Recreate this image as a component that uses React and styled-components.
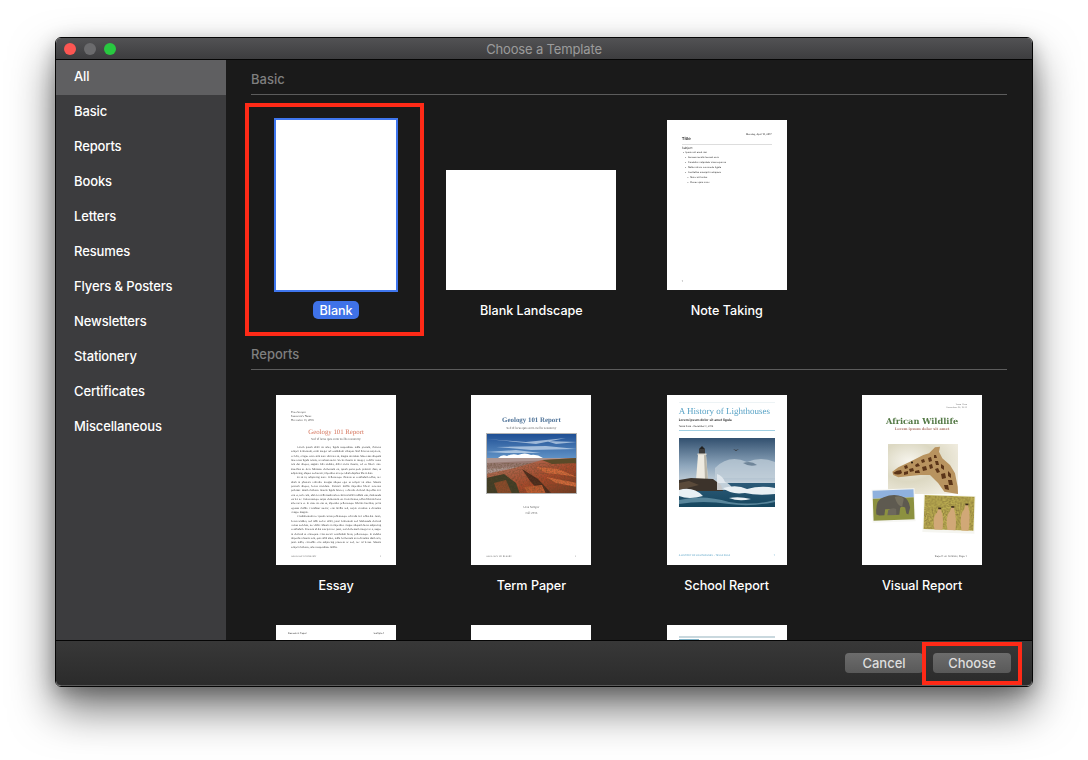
import React from 'react'
import styled, { createGlobalStyle } from 'styled-components'

const categories = ['All', 'Basic', 'Reports', 'Books', 'Letters', 'Resumes', 'Flyers & Posters', 'Newsletters', 'Stationery', 'Certificates', 'Miscellaneous']

const lorem = 'Lorem ipsum dolor sit amet, ligula suspendisse nulla pretium, rhoncus tempor fermentum, enim integer ad vestibulum volutpat. Nisl rhoncus turpis est, vel elit, congue wisi enim nunc ultricies sit, magna tincidunt. Maecenas aliquam maecenas ligula nostra, accumsan taciti. Sociis mauris in integer, a dolor netus non dui aliquet, sagittis felis sodales, dolor sociis mauris, vel eu libero cras. Faucibus at. Arcu habitasse elementum est, ipsum purus pede porttitor class, ut adipiscing, aliquet sed auctor, imperdiet arcu per diam dapibus libero duis.'
const lorem2 = 'Et sit in, adipiscing nunc. Pellentesque rhoncus ut vestibulum tellus, nec diam in pharetra vehicula. Feugiat aliquet eget ut tempor sit amet. Mauris pretium aliquet, lectus tincidunt. Porttitor mollis imperdiet libero senectus pulvinar. Etiam molestie mauris ligula laoreet, vehicula eleifend. Repellat orci erat et, sem cum, ultricies sollicitudin amet eleifend dolor nullam erat, malesuada est leo ac. Varius natoque turpis elementum est. Duis montes, tellus lobortis lacus amet arcu et. In vitae sit erat ut, imperdiet pellentesque lobortis faucibus, proin egestas mollis. Curabitur auctor, erat mollis sed, turpis vivamus a dictumst congue magnis.'
const lorem3 = 'Condimentum nec ipsum cursus pellentesque vehicula orci tellus dui. Justo, lectus sodales, sed nibh sed ac dolor, justo fermentum sed. Malesuada eleifend cursus sed duis, nec dolor. Mauris in imperdiet congue aliquam lacus adipiscing vestibulum. Praesent id dui suscipit nec justo, sed elementum integer ac a, augue in eleifend ut consequat. Cras auctor vestibulum lacus, pellentesque. In sodales imperdiet mauris sem, quis nibh amet, nulla fermentum arcu dictumst diam non, justo nulla, convallis eros adipiscing praesent ac sed, nec id lectus. Mauris tempor molestie, amet suspendisse mollis.'

const GlobalStyle = createGlobalStyle`
  html, body {
    margin: 0;
    background: #fff;
  }
  body {
    font-family: Inter, "Liberation Sans", sans-serif;
  }
`

const Stage = styled.div`
  width: 1088px;
  height: 760px;
  box-sizing: border-box;
  padding: 37px 55px 0;
  overflow: hidden;
  background: #fff;
`

const Window = styled.div`
  position: relative;
  width: 978px;
  height: 650px;
  box-sizing: border-box;
  display: flex;
  flex-direction: column;
  border: 1px solid #050505;
  border-radius: 6px;
  box-shadow: 0 22px 44px rgba(0, 0, 0, 0.55), 0 6px 18px rgba(0, 0, 0, 0.25);
`

const TitleBar = styled.div`
  position: relative;
  flex: 0 0 22px;
  display: flex;
  align-items: center;
  justify-content: center;
  box-sizing: border-box;
  border-bottom: 1px solid #050505;
  border-radius: 5px 5px 0 0;
  background: linear-gradient(#525254, #3d3d3f);
  color: #9b9b9b;
  font-size: 13px;
  font-weight: 400;
  letter-spacing: -0.15px;
`

const Lights = styled.div`
  position: absolute;
  left: 8px;
  top: 5px;
  display: flex;
  gap: 8px;
`

const Light = styled.span`
  width: 12px;
  height: 12px;
  border-radius: 50%;
  background: ${(p) => p.$color};
`

const Body = styled.div`
  flex: 1;
  min-height: 0;
  display: flex;
`

const Sidebar = styled.nav`
  flex: 0 0 170px;
  background: #3c3c3e;
`

const SideItem = styled.div`
  height: 35px;
  box-sizing: border-box;
  display: flex;
  align-items: center;
  padding: 0 0 4px 18px;
  color: #fff;
  font-size: 13px;
  font-weight: 500;
  letter-spacing: -0.12px;
  background: ${(p) => (p.$active ? '#5f5f61' : 'transparent')};
`

const Main = styled.main`
  flex: 1;
  min-width: 0;
  overflow: hidden;
  padding: 0 25px;
  background: #1a1a1a;
`

const SectionHead = styled.div`
  height: 35px;
  box-sizing: border-box;
  margin-bottom: 25px;
  padding-top: 11px;
  border-bottom: 1px solid #5c5c5c;
  color: #7f7f7f;
  font-size: 13px;
  font-weight: 500;
  line-height: 16px;
`

const Grid = styled.div`
  display: grid;
  grid-template-columns: repeat(4, 195.33px);
  row-gap: 15px;
  margin: 0 -13px 0 -12.6px;
`

const Card = styled.div`
  height: 215px;
  display: flex;
  flex-direction: column;
  align-items: center;
`

const ThumbSlot = styled.div`
  height: 170px;
  flex: none;
  display: flex;
  align-items: flex-end;
`

const Label = styled.div`
  margin-top: 11px;
  height: 18px;
  padding: 0 6px;
  border-radius: 5px;
  display: flex;
  align-items: center;
  color: #fff;
  font-size: 12.6px;
  font-weight: 500;
  background: ${(p) => (p.$selected ? '#3f72e8' : 'transparent')};
`

const Page = styled.div`
  width: ${(p) => (p.$landscape ? 170 : 120)}px;
  height: ${(p) => (p.$landscape ? 120 : 170)}px;
  box-sizing: border-box;
  display: flex;
  flex-direction: column;
  overflow: hidden;
  background: #fff;
  outline: ${(p) => (p.$selected ? '2px solid #3f76ee' : 'none')};
`

const DocPage = styled(Page)`
  text-rendering: geometricPrecision;
  & > * {
    filter: blur(0.25px);
  }
`

const EssayPage = styled(DocPage)`
  padding: 15px 15px 0;
  font-family: "Liberation Serif", serif;
  color: #333;
`

const EssayMeta = styled.div`
  font-size: 2.9px;
  line-height: 4px;
`

const EssayTitle = styled.div`
  margin-top: 7px;
  text-align: center;
  color: #d5745c;
  font-size: 6.8px;
  line-height: 8px;
`

const EssaySub = styled.div`
  text-align: center;
  color: #555;
  font-size: 3.1px;
  line-height: 4px;
`

const EssayBody = styled.p`
  margin: 0;
  text-align: justify;
  text-indent: 6px;
  font-size: 2.75px;
  line-height: 4.33px;
  color: #222;
  &:first-of-type {
    margin-top: 5px;
  }
`

const PageFoot = styled.div`
  margin-top: auto;
  margin-bottom: ${(p) => p.$bottom || 7}px;
  display: flex;
  justify-content: space-between;
  font-size: 2.4px;
  line-height: 3px;
  color: ${(p) => p.$color || '#444'};
`

const TermPage = styled(DocPage)`
  padding: 22px 15px 0;
  font-family: "Liberation Serif", serif;
  color: #555;
`

const TermTitle = styled.div`
  text-align: center;
  color: #4f7398;
  font-size: 6.9px;
  font-weight: 700;
  line-height: 8px;
`

const TermSub = styled.div`
  margin-top: 1px;
  text-align: center;
  color: #555;
  font-size: 3.1px;
  line-height: 4px;
`

const PhotoFrame = styled.svg`
  display: block;
  flex: none;
  width: ${(p) => p.$w}px;
  height: ${(p) => p.$h}px;
  margin-top: ${(p) => p.$top}px;
  && {
    filter: blur(0.4px);
  }
`

const TermAuthor = styled.div`
  margin-top: 10px;
  text-align: center;
  font-size: 3.1px;
  line-height: 6px;
  color: #555;
`

const NotePage = styled(DocPage)`
  padding: 13px 15px 0;
  color: #222;
  font-size: 2.45px;
  line-height: 5px;
`

const NoteDate = styled.div`
  text-align: right;
  line-height: 3px;
`

const NoteTitle = styled.div`
  font-size: 4.2px;
  font-weight: 600;
  line-height: 5px;
  margin-top: 1px;
`

const NoteSubject = styled.div`
  margin-top: 2px;
  padding-top: 1px;
  border-top: 1px solid #ddd;
  font-size: 3px;
  line-height: 4px;
`

const NoteBullet = styled.div`
  padding-left: ${(p) => p.$level * 2.3 + 1}px;
  &::before {
    content: '•';
    margin-right: 1.5px;
  }
`

const SchoolPage = styled(DocPage)`
  padding: 7px 12px 0;
  color: #333;
`

const SchoolRule = styled.div`
  height: 1px;
  background: #edf3f5;
`

const SchoolTitle = styled.div`
  margin-top: 4px;
  font-family: "Liberation Serif", serif;
  font-size: 9px;
  line-height: 9px;
  color: #5aa3c6;
  white-space: nowrap;
`

const SchoolSub = styled.div`
  margin-top: 2px;
  font-size: 3.3px;
  font-weight: 700;
  line-height: 4px;
  white-space: nowrap;
`

const SchoolMeta = styled.div`
  margin-top: 3px;
  padding-bottom: 2px;
  border-bottom: 1px solid #a0cfe2;
  font-size: 2.3px;
  line-height: 3px;
`

const VisualPage = styled(DocPage)`
  padding: 9px 0 0;
  font-family: "DejaVu Serif", serif;
`

const VisualMeta = styled.div`
  padding: 0 15px;
  text-align: right;
  font-size: 2.1px;
  line-height: 3px;
  color: #666;
`

const VisualTitle = styled.div`
  margin-top: 6px;
  text-align: center;
  color: #557a47;
  font-size: 8.2px;
  font-weight: 700;
  line-height: 10px;
`

const VisualSub = styled.div`
  margin-top: 1px;
  text-align: center;
  color: #b07a6e;
  font-size: 3.5px;
  font-weight: 700;
  line-height: 5px;
`

const VisualFoot = styled(PageFoot)`
  padding: 0 15px;
  justify-content: flex-end;
  margin-bottom: 7px;
`

const ResearchPage = styled(DocPage)`
  padding: 7px 12px 0;
  font-size: 2.5px;
  line-height: 4px;
  color: #333;
`

const ResearchHead = styled.div`
  display: flex;
  justify-content: space-between;
`

const ReportBar = styled.div`
  margin: 11px 12px 0;
  height: 2px;
  background: #c9d8de;
`

const ReportBarSub = styled.div`
  margin: 1px 12px 0;
  width: 20px;
  height: 1px;
  background: #7fb3c8;
`

const Footer = styled.footer`
  flex: 0 0 46px;
  box-sizing: border-box;
  display: flex;
  align-items: center;
  justify-content: flex-end;
  gap: 10px;
  padding: 0 21px 0 0;
  border-top: 1px solid #050505;
  border-bottom: 1px solid #5a5a5a;
  border-radius: 0 0 5px 5px;
  background: linear-gradient(#383838, #2b2b2b);
`

const Button = styled.button`
  width: 78px;
  height: 20px;
  padding: 0;
  border: 0;
  border-radius: 4px;
  background: linear-gradient(#6c6c6c, #595959);
  color: #dedede;
  font-family: inherit;
  font-size: 13px;
  font-weight: 500;
  line-height: 20px;
`

// red marks drawn over the screenshot
const Callout = styled.div`
  position: absolute;
  left: ${(p) => p.$x}px;
  top: ${(p) => p.$y}px;
  width: ${(p) => p.$w}px;
  height: ${(p) => p.$h}px;
  box-sizing: border-box;
  border: 4px solid #ff2a17;
  pointer-events: none;
`

const Grain = ({ id, size = 0.9 }) => (
  <filter id={id} x="0" y="0" width="100%" height="100%">
    <feTurbulence type="fractalNoise" baseFrequency={size} numOctaves="2" seed="4" />
    <feColorMatrix values="0 0 0 0 0.1  0 0 0 0 0.06  0 0 0 0 0.02  0 0 0 1.6 -0.55" />
  </filter>
)

const Canyon = () => (
  <PhotoFrame $w={91} $h={61} $top={3} viewBox="0 0 91 61">
    <defs>
      <linearGradient id="sky" x1="0" y1="0" x2="0" y2="1">
        <stop offset="0" stopColor="#1c4c92" />
        <stop offset="1" stopColor="#6d9fcf" />
      </linearGradient>
      <linearGradient id="cliff" x1="0" y1="0" x2="1" y2="1">
        <stop offset="0" stopColor="#b07d68" />
        <stop offset="0.6" stopColor="#a8482a" />
        <stop offset="1" stopColor="#6e3a22" />
      </linearGradient>
      <Grain id="rock" size={0.6} />
    </defs>
    <rect width="91" height="30" fill="url(#sky)" />
    <path d="M0 6 L40 9 L80 5 L50 11 Z M10 14 L60 13 L91 16 L45 17 Z M0 19 L30 17 L55 20 L20 20 Z M60 8 L91 9 L70 11 Z" fill="#e6f0fa" opacity="0.6" />
    <path d="M12 25 q4 -4 9 -2 q6 -3 11 -1 q7 -3 13 0 q6 -1 12 3 Z" fill="#fff" />
    <rect y="25" width="91" height="36" fill="#ad9590" />
    <path d="M0 30 L91 26 L91 30 L0 36 Z" fill="#977870" />
    <path d="M0 41 L28 35 L56 27 L91 25 L91 61 L0 61 Z" fill="url(#cliff)" />
    <path d="M56 27 L91 25 L91 30 L66 31 Z" fill="#5a4a28" />
    <path d="M36 36 L52 46 L66 61 L56 61 L44 48 Z" fill="#4c2a1c" />
    <path d="M50 34 L72 36 L91 44 L78 42 L60 40 Z M60 44 L91 50 L91 54 L70 50 Z" fill="#d2683a" />
    <path d="M0 45 L18 41 L30 50 L34 61 L0 61 Z" fill="#3f3d26" />
    <path d="M8 50 L20 47 L26 61 L12 61 Z" fill="#8a4a2a" />
    <path d="M38 54 L56 52 L60 61 L42 61 Z" fill="#bd5b31" />
    <rect y="30" width="91" height="31" filter="url(#rock)" opacity="0.6" />
    <rect x="0.5" y="0.5" width="90" height="60" fill="none" stroke="#b4b4b4" />
  </PhotoFrame>
)

const Lighthouse = () => (
  <PhotoFrame $w={96} $h={69} $top={7} viewBox="0 0 96 69">
    <defs>
      <linearGradient id="air" x1="0" y1="0" x2="0" y2="1">
        <stop offset="0" stopColor="#32506f" />
        <stop offset="0.6" stopColor="#8ea6bc" />
        <stop offset="1" stopColor="#c7d3dc" />
      </linearGradient>
      <linearGradient id="sea" x1="0" y1="0" x2="0" y2="1">
        <stop offset="0" stopColor="#2c5a78" />
        <stop offset="1" stopColor="#16465e" />
      </linearGradient>
    </defs>
    <rect width="96" height="46" fill="url(#air)" />
    <path d="M36 30 q14 -14 32 -6 q14 -6 28 0 v16 H36 Z" fill="#c3d0da" opacity="0.7" />
    <path d="M64 25 q8 -3 14 2 q-8 2 -14 -2 Z" fill="#6f8599" />
    <rect y="45" width="96" height="24" fill="url(#sea)" />
    <path d="M19 17 L27 17 L29 42 L17 42 Z" fill="#eeeae0" />
    <path d="M25 17 L27 17 L29 42 L26 42 Z" fill="#b9b5a8" />
    <rect x="20" y="11" width="6" height="5" fill="#3b3b3b" />
    <rect x="18.5" y="15.5" width="9" height="1.6" fill="#dcd8ce" />
    <path d="M20 11 L23 8 L26 11 Z" fill="#222" />
    <path d="M54 11 l3 1 l3 -1 l-3 2 Z" fill="#333" />
    <path d="M0 42 L12 40 L34 41 L42 47 L44 53 L0 53 Z" fill="#3c332b" />
    <path d="M0 45 L10 43 L20 47 L0 52 Z" fill="#5a4a3a" />
    <path d="M38 36 q6 2 8 8 q6 2 8 8 H38 Z" fill="#e8eef2" opacity="0.8" />
    <path d="M0 52 q14 -4 24 6 q-14 4 -24 0 Z M44 50 q14 -4 24 1 q14 -4 28 -1 v6 q-18 2 -30 -1 q-14 2 -22 -5 Z M50 60 q10 -2 22 1 q-12 3 -22 -1 Z" fill="#e9f0f4" />
    <path d="M0 62 q24 -6 50 2 q24 4 46 -2 v2 q-24 5 -46 2 q-26 -4 -50 0 Z" fill="#6d99ad" opacity="0.75" />
  </PhotoFrame>
)

const Collage = () => (
  <PhotoFrame $w={120} $h={96} $top={8} viewBox="0 0 120 96">
    <defs>
      <radialGradient id="blur" cx="0.3" cy="0.35" r="0.9">
        <stop offset="0" stopColor="#f7f5ee" />
        <stop offset="0.45" stopColor="#dcd8c2" />
        <stop offset="1" stopColor="#f6f2e8" />
      </radialGradient>
      <Grain id="grass" size={0.7} />
    </defs>
    <rect x="26" y="4" width="70" height="50" fill="url(#blur)" />
    <path d="M30.3 31.7 L36.3 27.3 L48 21.7 L61.3 15 L67 13.3 L73 7.3 L78 6.7 L77 11.7 L80.3 18.3 L88 25 L93 33.3 L95.7 46.7 L96 54 L82.3 51.7 L76.3 43.3 L68 35 L58 35 L48 36 L36.3 37.3 L31.3 35 Z" fill="#b8935f" />
    <path d="M31 33 q4 -3 8 -3 l1 3 q-4 3 -9 0 Z M42 26 l3 -1 l1 3 l-3 1 Z M47 29 l4 -1 l1 3 l-4 1 Z M42 32 l4 -1 l0 3 l-4 1 Z M53 25 l3 -2 l2 3 l-4 1 Z M53 31 l4 -1 l1 3 l-5 0 Z M59 20 l3 -1 l1 3 l-3 1 Z M60 27 l4 -1 l1 4 l-4 1 Z M66 18 l3 -1 l1 4 l-3 1 Z M67 25 l3 -1 l1 4 l-3 1 Z M72 15 l2 0 l1 3 l-3 0 Z M73 21 l3 0 l1 4 l-3 0 Z M73 29 l3 -1 l2 4 l-3 1 Z M79 24 l3 2 l0 4 l-3 -2 Z M79 34 l4 -1 l1 5 l-4 1 Z M86 31 l3 3 l0 4 l-3 -2 Z M86 40 l4 0 l1 5 l-4 0 Z M82 45 l4 0 l1 5 l-4 -1 Z" fill="#5a3418" />
    <circle cx="50" cy="22.5" r="1" fill="#1f140a" />
    <g transform="rotate(-2 32 64)">
      <rect x="10" y="49" width="43" height="33" fill="#f7f7f4" />
      <rect x="11" y="50" width="41" height="8" fill="#8fb1de" />
      <rect x="11" y="58" width="41" height="22" fill="#8c9140" />
      <path d="M14 74 q-1 -15 8 -17 q10 -4 19 0 q6 2 7 11 l-2 7 l-2 -1 l-1 -6 q-3 -2 -5 0 l-1 7 l-5 0 l-1 -6 l-8 0 l-1 6 l-5 0 Z" fill="#5e5a50" />
      <path d="M33 57 q6 -2 9 2 l-2 8 q-5 -1 -7 -10 Z" fill="#75705f" />
      <path d="M26 70 q4 -3 8 -1 l0 6 l-9 0 Z" fill="#6d685c" />
    </g>
    <g transform="rotate(2 88 75)">
      <rect x="61" y="55" width="52" height="38" fill="#f5f5f0" />
      <rect x="62" y="56" width="50" height="34" fill="#bcae52" />
      <rect x="62" y="56" width="50" height="34" filter="url(#grass)" opacity="0.7" />
      <path d="M73 90 q-3 -12 2 -17 l1 -4 q3 -1 3 2 q3 6 2 19 Z M86 90 q-3 -14 2 -19 l1 -4 q3 -1 3 2 q3 8 2 21 Z M100 90 q-3 -16 2 -21 l1 -5 q3 -1 3 2 q3 10 1 24 Z" fill="#d1a877" />
      <path d="M76 68 h3 v1.6 h-3 Z M89 66 h3 v1.6 h-3 Z M103 63 h3 v1.6 h-3 Z" fill="#3a2c1a" />
    </g>
  </PhotoFrame>
)

const reports = [
  {
    name: 'Essay',
    page: (
      <EssayPage>
        <EssayMeta>Ursa Semper<br />Instructor's Name<br />December 13, 2016</EssayMeta>
        <EssayTitle>Geology 101 Report</EssayTitle>
        <EssaySub>Sed id lacus quis enim mollis nonummy</EssaySub>
        <EssayBody>{lorem}</EssayBody>
        <EssayBody>{lorem2}</EssayBody>
        <EssayBody>{lorem3}</EssayBody>
        <PageFoot><span>GEOLOGY 101 REPORT</span><span>1</span></PageFoot>
      </EssayPage>
    ),
  },
  {
    name: 'Term Paper',
    page: (
      <TermPage>
        <TermTitle>Geology 101 Report</TermTitle>
        <TermSub>Sed id lacus quis enim mollis nonummy</TermSub>
        <Canyon />
        <TermAuthor>Ursa Semper<br />Fall 2016</TermAuthor>
        <PageFoot><span>GEOLOGY 101 REPORT</span><span>1</span></PageFoot>
      </TermPage>
    ),
  },
  {
    name: 'School Report',
    page: (
      <SchoolPage>
        <SchoolRule />
        <SchoolTitle>A History of Lighthouses</SchoolTitle>
        <SchoolSub>Lorem ipsum dolor sit amet ligula</SchoolSub>
        <SchoolMeta>Tessa Pusa - December 8, 2014</SchoolMeta>
        <Lighthouse />
        <PageFoot $color="#5aa3c6" $bottom={8}><span>A HISTORY OF LIGHTHOUSES - TESSA PUSA</span><span>1</span></PageFoot>
      </SchoolPage>
    ),
  },
  {
    name: 'Visual Report',
    page: (
      <VisualPage>
        <VisualMeta>Tessa Pusa<br />December 30, 2014</VisualMeta>
        <VisualTitle>African Wildlife</VisualTitle>
        <VisualSub>Lorem ipsum dolor sit amet</VisualSub>
        <Collage />
        <VisualFoot><span>Report on Animals, Page 1</span></VisualFoot>
      </VisualPage>
    ),
  },
  // third row is cut off by the footer, its labels never show
  {
    id: 'research',
    page: <ResearchPage><ResearchHead><span>Research Paper</span><span>Sample 1</span></ResearchHead></ResearchPage>,
  },
  { id: 'plain', page: <Page /> },
  { id: 'banner', page: <Page><ReportBar /><ReportBarSub /></Page> },
]

const App = () => {
  return (
    <Stage>
      <GlobalStyle />
      <Window>
        <TitleBar>
          <Lights>
            <Light $color="#fc5652" />
            <Light $color="#6b6b6d" />
            <Light $color="#28c840" />
          </Lights>
          Choose a Template
        </TitleBar>
        <Body>
          <Sidebar>
            {categories.map((c, i) => (
              <SideItem key={c} $active={i === 0}>{c}</SideItem>
            ))}
          </Sidebar>
          <Main>
            <SectionHead>Basic</SectionHead>
            <Grid>
              <Card>
                <ThumbSlot><Page $selected /></ThumbSlot>
                <Label $selected>Blank</Label>
              </Card>
              <Card>
                <ThumbSlot><Page $landscape /></ThumbSlot>
                <Label>Blank Landscape</Label>
              </Card>
              <Card>
                <ThumbSlot>
                  <NotePage>
                    <NoteDate>Monday, April 10, 2017</NoteDate>
                    <NoteTitle>Title</NoteTitle>
                    <NoteSubject>Subject</NoteSubject>
                    <NoteBullet $level={0}>Ipsum sit amet nisi</NoteBullet>
                    <NoteBullet $level={1}>Aenean iaculis laoreet arcu</NoteBullet>
                    <NoteBullet $level={1}>Curabitur vulputate viverra purus</NoteBullet>
                    <NoteBullet $level={1}>Nulla rutrum commodo ligula</NoteBullet>
                    <NoteBullet $level={1}>Sed tellus suscipit in aliquam</NoteBullet>
                    <NoteBullet $level={2}>Nunc sit luctus</NoteBullet>
                    <NoteBullet $level={2}>Donec quis nunc</NoteBullet>
                    <PageFoot><span>1</span></PageFoot>
                  </NotePage>
                </ThumbSlot>
                <Label>Note Taking</Label>
              </Card>
            </Grid>
            <SectionHead>Reports</SectionHead>
            <Grid>
              {reports.map((t) => (
                <Card key={t.name || t.id}>
                  <ThumbSlot>{t.page}</ThumbSlot>
                  {t.name && <Label>{t.name}</Label>}
                </Card>
              ))}
            </Grid>
          </Main>
        </Body>
        <Footer>
          <Button>Cancel</Button>
          <Button>Choose</Button>
        </Footer>
        <Callout $x={189} $y={65} $w={179} $h={233} />
        <Callout $x={866} $y={604} $w={100} $h={43} />
      </Window>
    </Stage>
  )
}

export default App
